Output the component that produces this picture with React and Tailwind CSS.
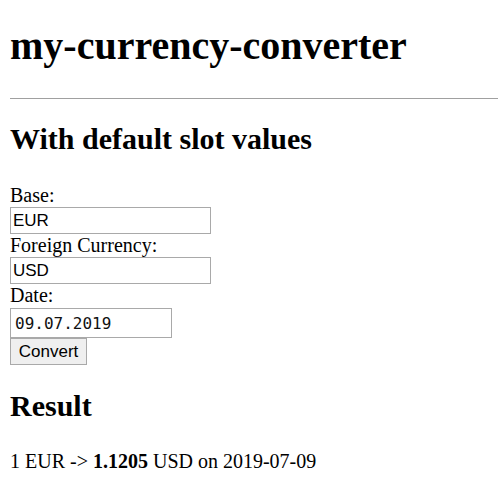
import React from 'react';

export default function App() {
  return (
    <div className="min-h-screen bg-white pl-[10px] text-black font-['Liberation_Serif',serif]">
      <h1 className="pt-[23px] text-[40px] font-bold leading-[46px]">my-currency-converter</h1>
      <div className="mt-[29px] border-t border-[#a0a0a0]" />
      <h2 className="mt-[22px] text-[30px] font-bold leading-[35px]">With default slot values</h2>

      <form className="mt-[28px] flex flex-col items-start" onSubmit={(e) => e.preventDefault()}>
        <label className="h-[23px] text-[20px] leading-[23px]">Base:</label>
        <input
          defaultValue="EUR"
          className="h-[27px] w-[201px] border border-[#a9a9a9] px-[2px] font-['Liberation_Sans',Arial,sans-serif] text-[17px] outline-none"
        />
        <label className="h-[23px] text-[20px] leading-[23px]">Foreign Currency:</label>
        <input
          defaultValue="USD"
          className="h-[27px] w-[201px] border border-[#a9a9a9] px-[2px] font-['Liberation_Sans',Arial,sans-serif] text-[17px] outline-none"
        />
        <label className="h-[24px] text-[20px] leading-[23px]">Date:</label>
        <input
          defaultValue="09.07.2019"
          className="h-[30px] w-[162px] border border-[#a9a9a9] px-[4px] font-['DejaVu_Sans_Mono',monospace] text-[16px] text-[#111] outline-none"
        />
        <button
          type="submit"
          className="h-[27px] w-[77px] border border-[#a9a9a9] bg-[#efefef] font-['Liberation_Sans',Arial,sans-serif] text-[17px] leading-none"
        >
          Convert
        </button>
      </form>

      <h2 className="mt-[23px] text-[30px] font-bold leading-[35px]">Result</h2>
      <p className="mt-[27px] text-[20px] leading-[23px]">
        1 EUR -&gt; <b>1.1205</b> USD on 2019-07-09
      </p>
    </div>
  );
}
